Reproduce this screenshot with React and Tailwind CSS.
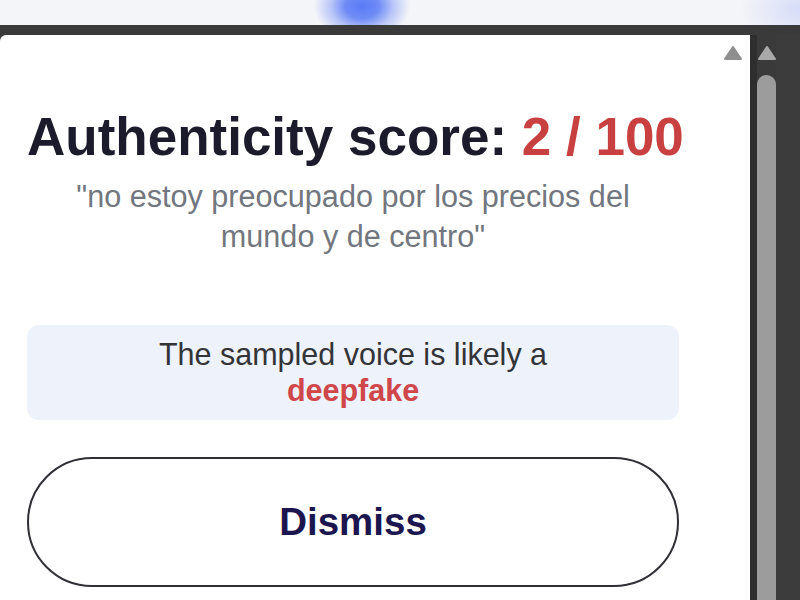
export default function App() {
  return (
    <div className="w-[800px] h-[600px] overflow-hidden flex flex-col bg-[#3a3a3a] font-['Liberation_Sans',Arial,sans-serif]">
      {/* top strip with blurred blue glow */}
      <div className="h-[25px] shrink-0 bg-[radial-gradient(ellipse_48px_36px_at_362px_6px,#5a7bf6_0%,#6f8cf6_35%,#b9c6f8_65%,rgba(240,242,250,0)_100%),radial-gradient(ellipse_60px_40px_at_800px_10px,#d6dcf8_0%,rgba(240,242,250,0)_100%)] bg-[#f4f5f8]" />

      <div className="flex flex-1 pt-[10px]">
        {/* popup panel */}
        <div className="w-[750px] bg-white rounded-tl-[6px] flex">
          <div className="w-[706px] px-[27px] pt-[71px] flex flex-col items-stretch">
            <h1 className="text-center text-[53px] leading-[62px] font-bold text-[#1b1b2c] whitespace-nowrap">
              Authenticity score: <span className="text-[#c8403f]">2 / 100</span>
            </h1>
            <p className="mt-[8px] mx-auto max-w-[620px] text-center text-[30.6px] leading-[40px] text-[#72767e]">
              "no estoy preocupado por los precios del mundo y de centro"
            </p>

            <div className="mt-[69px] h-[95px] rounded-[12px] bg-[#eef2fa] pt-[11px] text-center text-[30.5px] leading-[36px] text-[#333438]">
              The sampled voice is likely a
              <span className="block font-bold text-[#d0464a]">deepfake</span>
            </div>

            <button className="mt-[37px] h-[130px] rounded-full border-2 border-[#2f2f36] bg-white text-[38.5px] font-bold text-[#1b1650]">
              Dismiss
            </button>
          </div>
          <div className="flex-1 flex justify-end pr-[8px] pt-[11px]">
            <svg width="18" height="14" viewBox="0 0 18 14">
              <path d="M9 1 L17 13 L1 13 Z" fill="#8e8e8e" strokeLinejoin="round" stroke="#8e8e8e" strokeWidth="2" />
            </svg>
          </div>
        </div>

        {/* scrollbar */}
        <div className="w-[50px] flex">
          <div className="w-[7px] bg-[#2e2e2e]" />
          <div className="w-[19px] flex flex-col items-center">
            <svg width="18" height="14" viewBox="0 0 18 14" className="mt-[11px]">
              <path d="M9 1 L17 13 L1 13 Z" fill="#a9a9a9" strokeLinejoin="round" stroke="#a9a9a9" strokeWidth="2" />
            </svg>
            <div className="mt-[15px] flex-1 w-full rounded-t-full bg-[#9c9c9c]" />
          </div>
          <div className="flex-1 bg-[#3c3c3c]" />
        </div>
      </div>
    </div>
  );
}
